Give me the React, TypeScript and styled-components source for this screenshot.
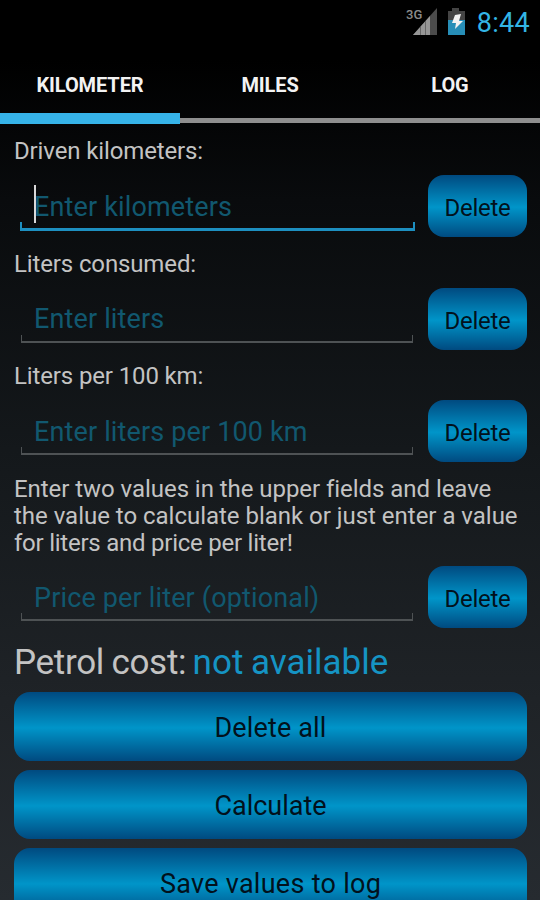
import React from 'react';
import styled, { createGlobalStyle, css } from 'styled-components';

const GlobalStyle = createGlobalStyle`
  *, *::after { box-sizing: border-box; }
  html, body { margin: 0; background: #000; overflow: hidden; }
`;

const Screen = styled.main`
  width: 540px;
  height: 900px;
  overflow: hidden;
  display: flex;
  flex-direction: column;
  font-family: Roboto, sans-serif;
  color: #c3c3c3;
  background: linear-gradient(#000 0, #000 60px, #090b0d 200px, #14181b 450px, #1f2327 700px, #262b30 900px);
`;

const StatusBar = styled.header`
  height: 45px;
  flex: none;
  display: flex;
  justify-content: flex-end;
  padding-right: 10px;
  background: #000;
`;

const StatusIcons = styled.svg`
  width: 64px;
  height: 45px;
  margin-right: 7px;
`;

const NetworkLabel = styled.text`
  font: 500 13px Roboto, sans-serif;
  fill: #8a8a8a;
`;

const Clock = styled.time`
  font-size: 27px;
  line-height: 46px;
  letter-spacing: 0.3px;
  color: #33b5e5;
`;

const Tabs = styled.nav`
  flex: none;
  height: 80px;
  display: grid;
  grid-template-columns: repeat(3, 1fr);
  background: linear-gradient(#8f8f8f, #8f8f8f) 0 73px / 100% 5px no-repeat;
`;

const Tab = styled.button<{ $active?: boolean }>`
  border: 0;
  padding: 11px 0 0;
  margin-bottom: 1px;
  background: none;
  border-bottom: 11px solid ${(p) => (p.$active ? '#36b3e8' : 'transparent')};
  font: 700 20px Roboto, sans-serif;
  letter-spacing: -0.1px;
  color: #f3f3f3;
`;

const Form = styled.section`
  padding: 12px 13px 0 14px;
`;

const Label = styled.label`
  display: block;
  height: 38px;
  font-size: 24px;
  line-height: 29px;
  letter-spacing: -0.13px;
  white-space: nowrap;
`;

const FieldRow = styled.div<{ $gap: number }>`
  display: flex;
  justify-content: space-between;
  height: 62px;
  margin-bottom: ${(p) => p.$gap}px;
`;

const Field = styled.div<{ $focused?: boolean }>`
  position: relative;
  width: ${(p) => (p.$focused ? 395 : 393)}px;
  height: ${(p) => (p.$focused ? 56 : 55)}px;
  margin-left: 6px;

  &::after {
    content: '';
    position: absolute;
    left: 0;
    right: 0;
    bottom: 0;
    height: ${(p) => (p.$focused ? 9 : 8)}px;
    border: ${(p) => (p.$focused ? '3px solid #1d8fc0' : '2px solid #4e5254')};
    border-top: 0;
    ${(p) =>
      p.$focused
        ? css`border-left-width: 2px; border-right-width: 2px;`
        : css`border-left-width: 1px; border-right-width: 1px; left: 1px;`}
    pointer-events: none;
  }
`;

const Input = styled.input`
  width: 100%;
  height: 63px;
  padding: 0 0 0 14px;
  border: 0;
  outline: 0;
  background: none;
  font: 27px Roboto, sans-serif;
  letter-spacing: 0.15px;
  color: #0099cc;
  &::placeholder { color: #11586f; opacity: 1; }
`;

const Caret = styled.span`
  position: absolute;
  left: 14px;
  top: 10px;
  width: 1.5px;
  height: 38px;
  background: #d8d8d8;
`;

const Button = styled.button<{ $wide?: boolean; $tracking?: number }>`
  flex: none;
  display: block;
  width: ${(p) => (p.$wide ? '100%' : '99px')};
  height: ${(p) => (p.$wide ? 69 : 62)}px;
  padding: ${(p) => (p.$wide ? '3px' : '4px')} 0 0;
  border: 0;
  border-radius: 16px;
  background: linear-gradient(#004a80, #0095c9 52%, #004a80);
  font: ${(p) => (p.$wide ? 27 : 24)}px Roboto, sans-serif;
  letter-spacing: ${(p) => p.$tracking ?? 0}px;
  color: #02111c;
`;

const Hint = styled.p`
  margin: 0;
  padding: 1px 0 9px;
  font-size: 24px;
  line-height: 27px;
  white-space: nowrap;
`;

const HintLine = styled.span<{ $tracking: number }>`
  display: block;
  letter-spacing: ${(p) => p.$tracking}px;
`;

const Cost = styled.p`
  height: 42px;
  margin: 0 0 9px;
  font-size: 35px;
  line-height: 43px;
  letter-spacing: -0.3px;
  word-spacing: -1px;
  white-space: nowrap;
`;

const CostValue = styled.span`
  letter-spacing: 0;
  margin-left: -1px;
  color: #1594c4;
`;

const Actions = styled.div`
  display: flex;
  flex-direction: column;
  gap: 9px;
`;

function StatusGlyphs() {
  return (
    <StatusIcons viewBox="0 0 64 45">
      <NetworkLabel x="0" y="19">3G</NetworkLabel>
      <path d="M7 35 31 8V35Z" fill="#4b4b4b" />
      <path d="M7 35 24 15.9V35Z" fill="#969696" />
      <path d="M14.5 27V35M19.5 21V35" stroke="#666" />
      <path d="M42 11h4V8h7v3h6v24H42Z" fill="#444" />
      <path d="M42 20h17v15H42Z" fill="#278eb7" />
      <path d="m49 15 6-1-2 7h4l-8 8 1-6h-4Z" fill="#f2f2f2" />
    </StatusIcons>
  );
}

interface EntryProps {
  hint: string;
  gap: number;
  focused?: boolean;
}

function Entry({ hint, gap, focused }: EntryProps) {
  return (
    <FieldRow $gap={gap}>
      <Field $focused={focused}>
        <Input placeholder={hint} aria-label={hint} />
        {focused && <Caret />}
      </Field>
      <Button $tracking={-0.25}>Delete</Button>
    </FieldRow>
  );
}

export default function App() {
  return (
    <>
      <GlobalStyle />
      <Screen>
        <StatusBar>
          <StatusGlyphs />
          <Clock>8:44</Clock>
        </StatusBar>
        <Tabs>
          <Tab $active>KILOMETER</Tab>
          <Tab>MILES</Tab>
          <Tab>LOG</Tab>
        </Tabs>
        <Form>
          <Label>Driven kilometers:</Label>
          <Entry hint="Enter kilometers" gap={12.5} focused />
          <Label>Liters consumed:</Label>
          <Entry hint="Enter liters" gap={12.5} />
          <Label>Liters per 100 km:</Label>
          <Entry hint="Enter liters per 100 km" gap={13} />
          <Hint>
            <HintLine $tracking={-0.05}>Enter two values in the upper fields and leave</HintLine>
            <HintLine $tracking={-0.02}>the value to calculate blank or just enter a value</HintLine>
            <HintLine $tracking={-0.24}>for liters and price per liter!</HintLine>
          </Hint>
          <Entry hint="Price per liter (optional)" gap={13} />
          <Cost>
            Petrol cost: <CostValue>not available</CostValue>
          </Cost>
          <Actions>
            <Button $wide $tracking={0.15}>Delete all</Button>
            <Button $wide>Calculate</Button>
            <Button $wide $tracking={0.28}>Save values to log</Button>
          </Actions>
        </Form>
      </Screen>
    </>
  );
}
